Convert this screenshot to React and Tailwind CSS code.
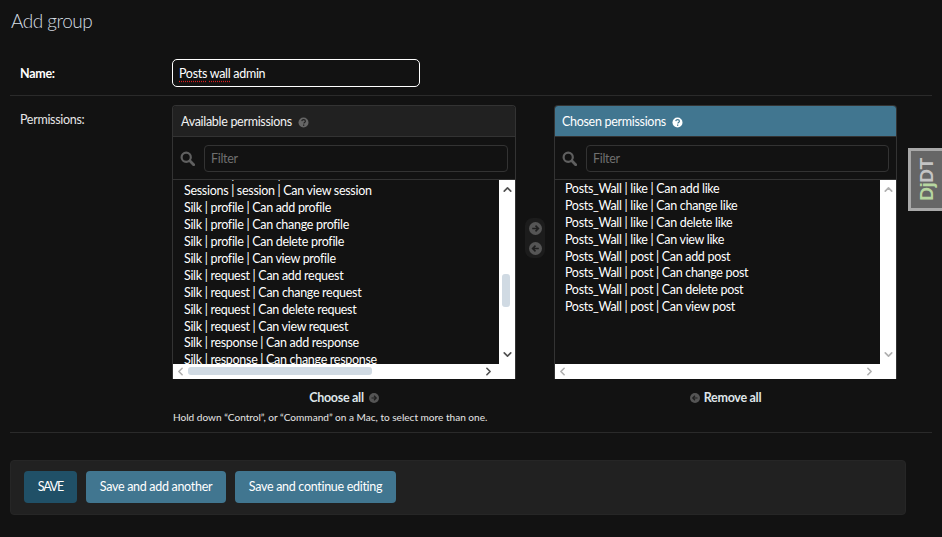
import React from "react";
import { ChevronUp, ChevronDown, ChevronLeft, ChevronRight } from "lucide-react";

const font = { fontFamily: 'Lato, "Open Sans", sans-serif' };

function HelpIcon({ light }) {
  return (
    <svg width="11" height="11" viewBox="0 0 11 11" className="shrink-0">
      <circle cx="5.5" cy="5.5" r="5" fill={light ? "#ffffff" : "#666666"} />
      <path d="M3.7 4.2c.2-1 1-1.5 1.9-1.5 1 0 1.8.6 1.8 1.5 0 .7-.4 1-1 1.4-.4.3-.5.5-.5 1" fill="none" stroke={light ? "#417690" : "#212121"} strokeWidth="1.2" />
      <rect x="5" y="7.5" width="1.3" height="1.3" fill={light ? "#417690" : "#212121"} />
    </svg>
  );
}

function ArrowCircle({ dir, size = 13, color = "#555555" }) {
  const d = dir === "right" ? "M3.2 6.5h6M6.5 3.6l2.9 2.9-2.9 2.9" : "M9.8 6.5h-6M6.5 3.6L3.6 6.5l2.9 2.9";
  return (
    <svg width={size} height={size} viewBox="0 0 13 13" className="shrink-0">
      <circle cx="6.5" cy="6.5" r="6.5" fill={color} />
      <path d={d} fill="none" stroke="#1f1f1f" strokeWidth="1.6" />
    </svg>
  );
}

function SearchIcon() {
  return (
    <svg width="15" height="15" viewBox="0 0 15 15" className="shrink-0">
      <circle cx="6.2" cy="6.2" r="4.6" fill="none" stroke="#5f5f5f" strokeWidth="2.2" />
      <path d="M9.8 9.8l3.9 3.9" stroke="#5f5f5f" strokeWidth="2.8" strokeLinecap="round" />
    </svg>
  );
}

function ListBox({ items, active, first, pad, thumbV, thumbH }) {
  const arrow = active ? "text-[#505050]" : "text-[#b0b0b0]";
  return (
    <div className="flex h-[199px] flex-col bg-white">
      <div className="flex h-[184px]">
        <div className={`flex-1 overflow-hidden bg-[#121212] ${pad}`}>
          {items.map((t, i) => (
            <div key={t} className={`h-[16.9px] whitespace-nowrap leading-[16.9px] text-white ${i === 0 ? first : ""}`}>{t}</div>
          ))}
        </div>
        <div className="relative flex w-[16px] flex-col items-center justify-between py-[3px]">
          <ChevronUp size={13} strokeWidth={3} className={arrow} />
          {thumbV && <div className="absolute left-[3px] top-[94px] h-[33px] w-[8px] rounded-[3px] bg-[#d0dae3]" />}
          <ChevronDown size={13} strokeWidth={3} className={arrow} />
        </div>
      </div>
      <div className="relative flex h-[15px] items-center justify-between pl-[1px] pr-[20px]">
        <ChevronLeft size={13} strokeWidth={3} className="text-[#b0b0b0]" />
        {thumbH && <div className="absolute left-[15px] top-[3px] h-[8px] w-[184px] rounded-[3px] bg-[#d0dae3]" />}
        <ChevronRight size={13} strokeWidth={3} className={arrow} />
      </div>
    </div>
  );
}

function FilterRow() {
  return (
    <div className="flex h-[44px] items-center gap-[9px] border-y border-[#333333] pl-[7px] pr-[7px]">
      <SearchIcon />
      <div className="flex h-[27px] flex-1 items-center rounded-[4px] border border-[#333333] pl-[6px] pt-[2px] text-[#6f6f6f]">Filter</div>
    </div>
  );
}

const available = [
  "Sessions | session | Can delete session",
  "Sessions | session | Can view session",
  "Silk | profile | Can add profile",
  "Silk | profile | Can change profile",
  "Silk | profile | Can delete profile",
  "Silk | profile | Can view profile",
  "Silk | request | Can add request",
  "Silk | request | Can change request",
  "Silk | request | Can delete request",
  "Silk | request | Can view request",
  "Silk | response | Can add response",
  "Silk | response | Can change response",
];

const chosen = [
  "Posts_Wall | like | Can add like",
  "Posts_Wall | like | Can change like",
  "Posts_Wall | like | Can delete like",
  "Posts_Wall | like | Can view like",
  "Posts_Wall | post | Can add post",
  "Posts_Wall | post | Can change post",
  "Posts_Wall | post | Can delete post",
  "Posts_Wall | post | Can view post",
];

const spell = "underline decoration-dotted decoration-[#e02020] underline-offset-[3px]";

export default function App() {
  return (
    <div className="relative h-[537px] w-[942px] overflow-hidden bg-[#121212] px-[10px] text-[12.5px] tracking-[-0.3px] text-white" style={font}>
      <h1 className="h-[58px] pl-[1px] pt-[9px] text-[19px] font-light leading-[24px] tracking-[-0.5px] text-[#d5dde2]">Add group</h1>

      <div className="flex h-[38px] items-start border-b border-[#2a2a2a] pt-[1px]">
        <label className="w-[162px] pl-[10px] pt-[6px] font-bold text-white">Name:</label>
        <div className="flex h-[28px] w-[248px] items-center rounded-[5px] border border-white pl-[6px] pt-[2px] text-white">
          <span><span className={spell}>Posts</span> <span className={spell}>wall</span> admin</span>
        </div>
      </div>

      <div className="flex h-[337px] border-b border-[#2a2a2a] pt-[9px]">
        <label className="w-[162px] pl-[10px] pt-[6px] text-[#e6e6e6]">Permissions:</label>
        <div className="w-[725px]">
          <div className="flex">
            <div className="w-[344px] overflow-hidden rounded-t-[4px] border border-[#333333] border-b-0">
              <div className="flex h-[30px] items-center gap-[6px] bg-[#212121] pl-[8px] pt-[3px] text-[#f2f2f2]">
                Available permissions <HelpIcon />
              </div>
              <FilterRow />
              <ListBox items={available} active first="-mt-[13.5px]" pad="pl-[11px]" thumbV thumbH />
            </div>
            <div className="flex w-[38px] items-start justify-center pt-[113px]">
              <div className="flex h-[40px] w-[20px] flex-col items-center justify-center gap-[7px] rounded-[8px] bg-[#1c1c1c]">
                <ArrowCircle dir="right" />
                <ArrowCircle dir="left" />
              </div>
            </div>
            <div className="w-[343px] overflow-hidden rounded-t-[4px] border border-[#333333] border-b-0">
              <div className="flex h-[30px] items-center gap-[6px] bg-[#417690] pl-[7px] pt-[3px] text-white">
                Chosen permissions <HelpIcon light />
              </div>
              <FilterRow />
              <ListBox items={chosen} first="mt-[1px]" pad="pl-[10px]" />
            </div>
          </div>
          <div className="flex h-[35px] items-center pt-[3px]">
            <div className="flex w-[344px] items-center justify-center gap-[5px] font-bold text-[#dfe5e9]">
              Choose all <ArrowCircle dir="right" size={10} />
            </div>
            <div className="w-[38px]" />
            <div className="flex w-[343px] items-center justify-center gap-[4px] font-bold text-[#dfe5e9]">
              <ArrowCircle dir="left" size={10} /> Remove all
            </div>
          </div>
          <p className="-mt-[3px] pl-[1px] text-[10.07px] leading-[13px] tracking-normal text-[#e6e6e6]">Hold down “Control”, or “Command” on a Mac, to select more than one.</p>
        </div>
      </div>

      <div className="mt-[27px] flex h-[55px] w-[896px] items-center gap-[9px] rounded-[4px] border border-[#262626] bg-[#212121] pb-[2px] pl-[13px]">
        <button className="h-[32px] w-[53px] rounded-[4px] bg-[#205067] pt-[1px] text-[12.5px] tracking-[-1.2px] text-white">SAVE</button>
        <button className="h-[32px] w-[140px] rounded-[4px] bg-[#417690] pt-[2px] text-white">Save and add another</button>
        <button className="h-[32px] w-[161px] rounded-[4px] bg-[#417690] pt-[2px] text-white">Save and continue editing</button>
      </div>

      <div className="absolute left-[908px] top-[148px] flex h-[63px] w-[34px] items-center justify-center border-[3px] border-r-0 border-[#a8a8a8] bg-[#666666]">
        <span className="-rotate-90 whitespace-nowrap text-[19px] font-bold leading-none tracking-[-0.5px] text-[#c4c4c4]" style={{ fontFamily: '"Liberation Sans", sans-serif' }}>
          <span className="text-[#b7d6a0]">Dj</span>DT
        </span>
      </div>
    </div>
  );
}
